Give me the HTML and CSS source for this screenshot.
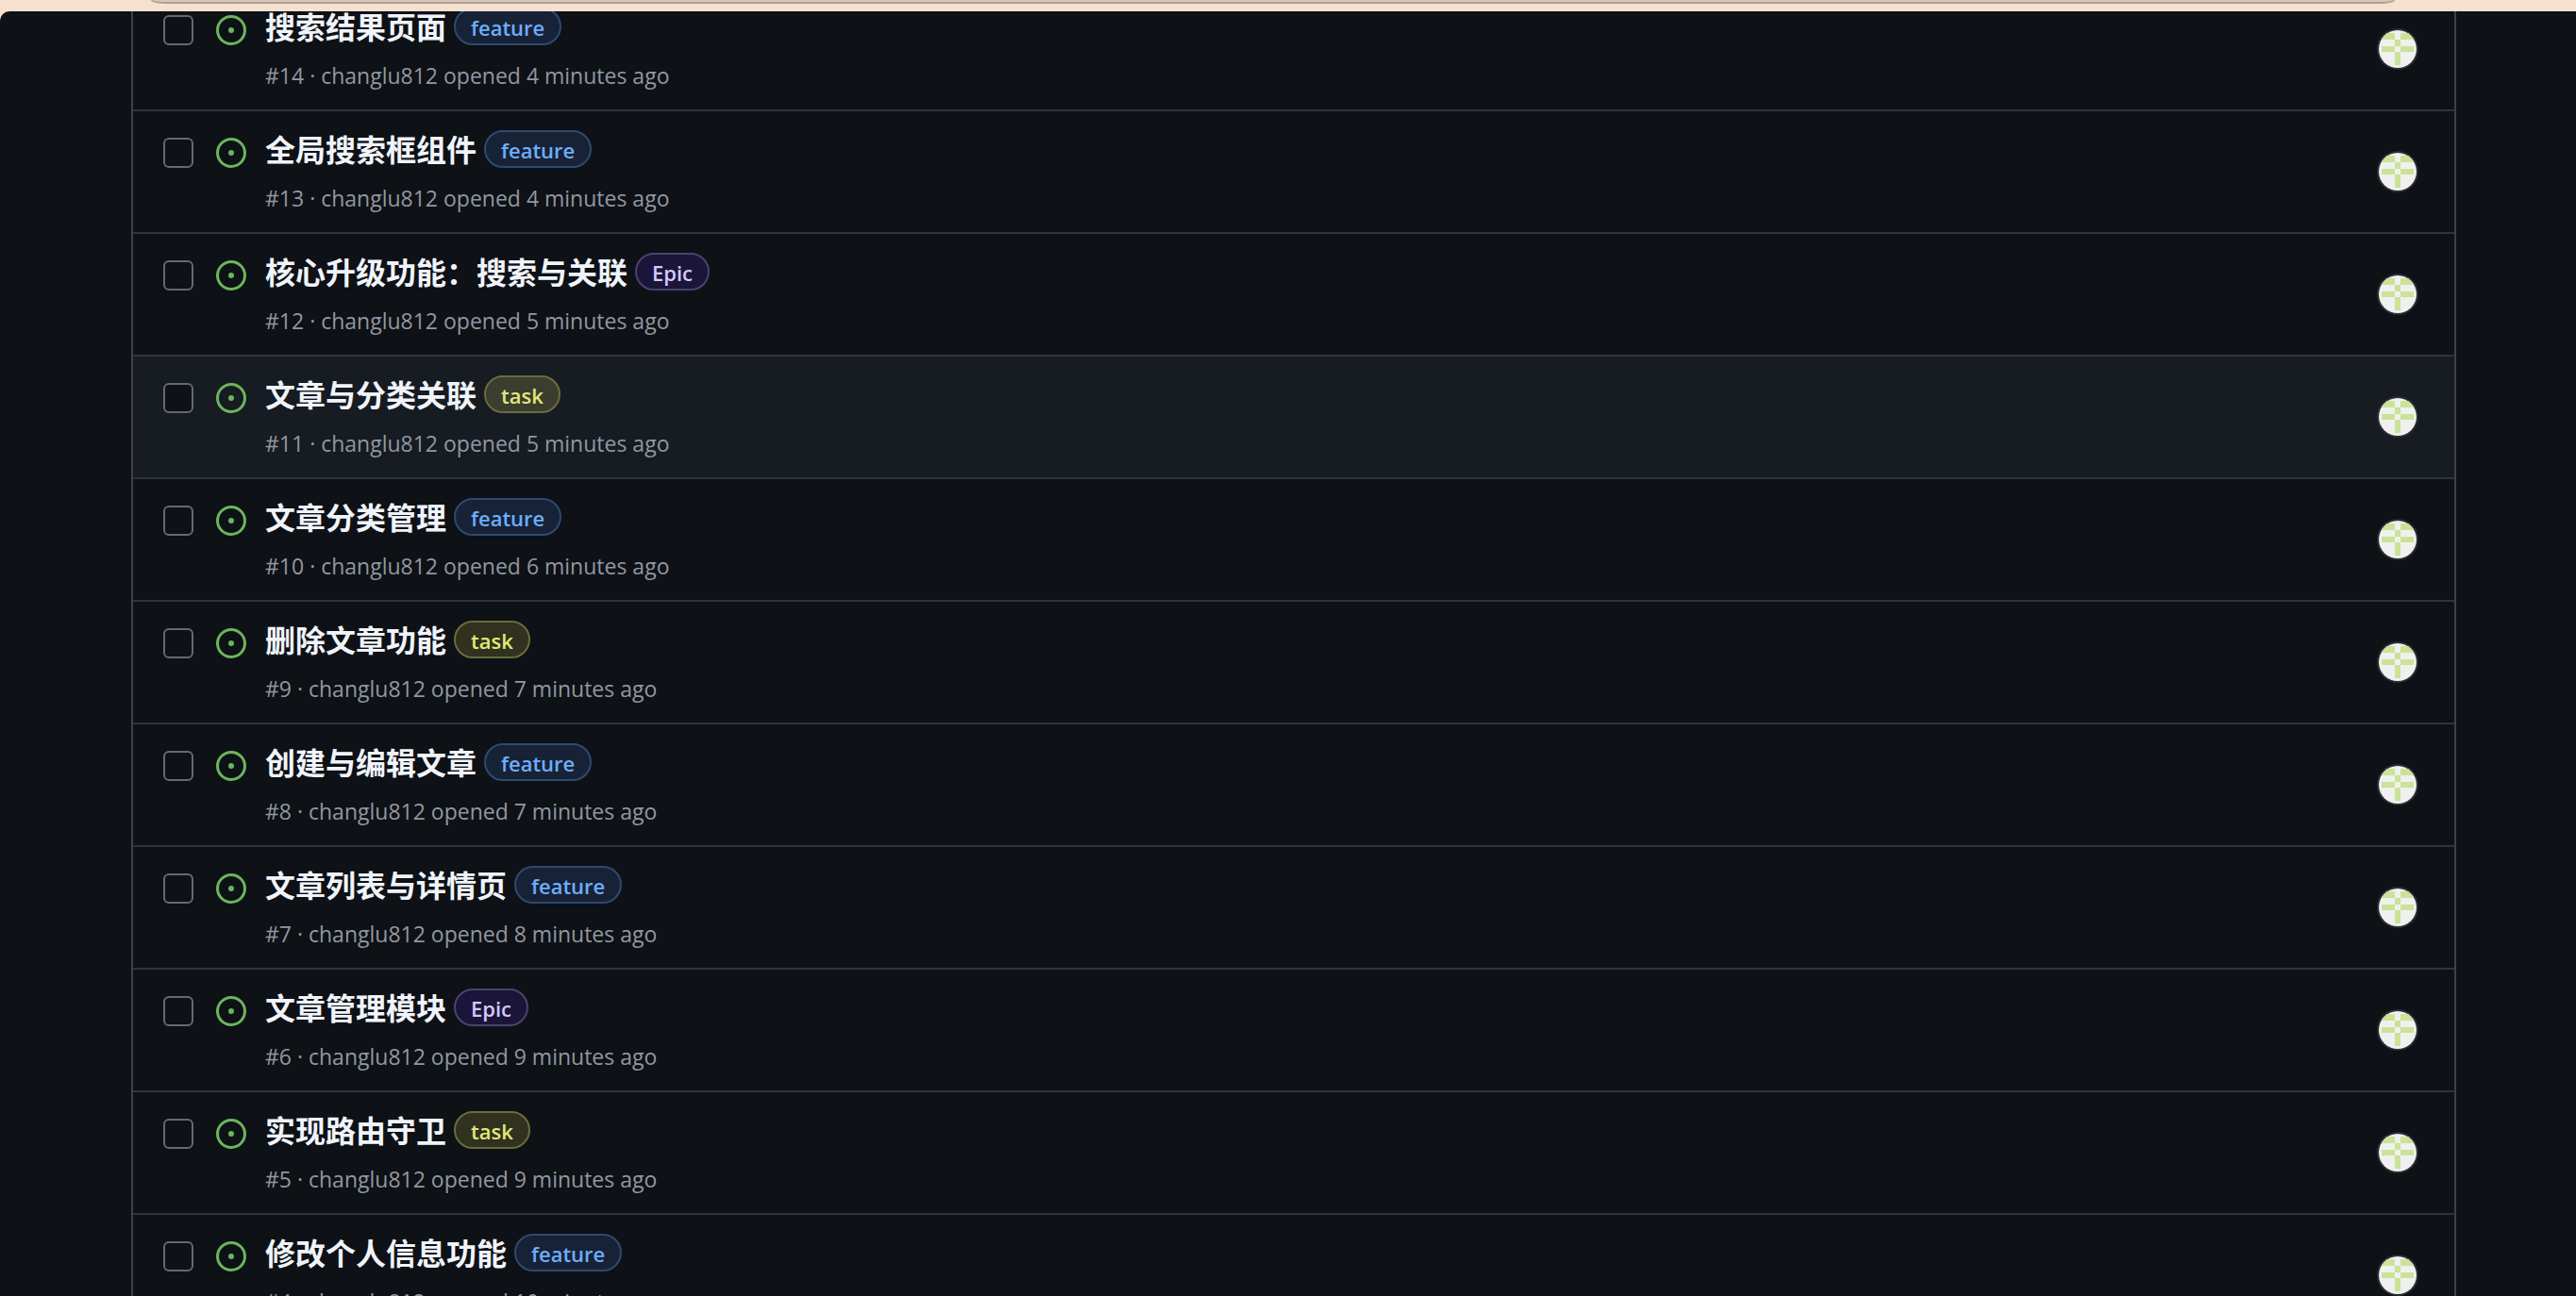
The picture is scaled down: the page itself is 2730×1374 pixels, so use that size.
FILE: index.html
```html
<!DOCTYPE html>
<html lang="zh-CN">
<head>
<meta charset="utf-8">
<title>Issues</title>
<link rel="stylesheet" href="styles.css">
</head>
<body>
<svg class="defs" aria-hidden="true">
  <symbol id="open" viewBox="0 0 16 16"><path d="M8 9.5a1.5 1.5 0 1 0 0-3 1.5 1.5 0 0 0 0 3Z"/><path d="M8 0a8 8 0 1 1 0 16A8 8 0 0 1 8 0ZM1.5 8a6.5 6.5 0 1 0 13 0 6.5 6.5 0 0 0-13 0Z"/></symbol>
  <symbol id="identicon" viewBox="0 0 40 40"><rect width="40" height="40" fill="#f0f0f0"/><path fill="#cbe396" d="M3 3h14v7H3zM23 3h14v7H23zM17 10h6v7h-6zM3 17h14v6H3zM23 17h14v6H23zM17 23h6v14h-6z"/></symbol>
</svg>
<header class="toolbar"><div class="address"></div></header>
<main class="page">
  <ul class="issues" id="issues"></ul>
</main>
<script src="issues.js"></script>
</body>
</html>
```
FILE: styles.css
```css
* { box-sizing: border-box; }
body {
  margin: 0;
  height: 100vh;
  display: flex;
  flex-direction: column;
  overflow: hidden;
  background: #f6e1d1;
  color: #9198a1;
  font: 23px/32px "Open Sans", "Noto Sans CJK SC", sans-serif;
}
.defs { position: absolute; width: 0; height: 0; }
.toolbar { flex: none; height: 12px; padding: 0 192px 0 160px; }
.address {
  height: 4px;
  border: 2px solid #aea093;
  border-top: 0;
  border-radius: 0 0 16px 16px / 0 0 4px 4px;
  background: #d9c6b8;
}
.page {
  flex: 1;
  min-height: 0;
  overflow: hidden;
  padding: 0 127px 0 139px;
  background: #0e1116;
  border-top-left-radius: 10px;
}
.issues {
  list-style: none;
  margin: -26px 0 0;
  padding: 0;
  border: solid #3d424a;
  border-width: 0 2px;
}
.issue {
  display: flex;
  align-items: flex-start;
  height: 130px;
  padding: 0 40px 0 32px;
  border-top: 2px solid #30343a;
}
.issue.active { background: #171b22; }
.check {
  appearance: none;
  flex: none;
  width: 32px;
  height: 32px;
  margin: 28px 24px 0 0;
  border: 2px solid #656971;
  border-radius: 6px;
  background: #0e1116;
}
.state { flex: none; width: 32px; height: 32px; margin: 28px 20px 0 0; fill: #6cb55d; }
.body { flex: 1; padding-top: 20px; }
.heading { display: flex; gap: 8px; height: 40px; }
.title {
  color: #f0f4fa;
  font: bold 32px/38px "Noto Sans CJK SC", sans-serif;
  text-decoration: none;
}
.label {
  height: 40px;
  padding: 0 16px;
  border: 2px solid;
  border-radius: 20px;
  font-size: 22px;
  font-weight: 600;
  line-height: 38px;
  text-decoration: none;
}
.feature { color: #6daefb; background: #172236; border-color: #2d4a70; }
.task { color: #e1e878; background: #30311f; border-color: #6a6c3d; }
.active .task { background: #3b3d2f; }
.epic { color: #d5c9fb; background: #1b1539; border-color: #4b426e; }
.meta { margin: 16px 0 0; }
.avatar {
  flex: none;
  width: 40px;
  height: 40px;
  margin-top: 44px;
  border-radius: 50%;
  box-shadow: 0 0 0 2px #2b2f35;
}
```
FILE: issues.js
```js
const issues = [
  [14, "搜索结果页面", "feature", 4],
  [13, "全局搜索框组件", "feature", 4],
  [12, "核心升级功能：搜索与关联", "Epic", 5],
  [11, "文章与分类关联", "task", 5],
  [10, "文章分类管理", "feature", 6],
  [9, "删除文章功能", "task", 7],
  [8, "创建与编辑文章", "feature", 7],
  [7, "文章列表与详情页", "feature", 8],
  [6, "文章管理模块", "Epic", 9],
  [5, "实现路由守卫", "task", 9],
  [4, "修改个人信息功能", "feature", 10],
];

document.getElementById("issues").innerHTML = issues.map(([id, title, label, age]) => `
  <li class="issue${id === 11 ? " active" : ""}">
    <input class="check" type="checkbox" aria-label="${title}">
    <svg class="state" aria-hidden="true"><use href="#open"/></svg>
    <div class="body">
      <div class="heading"><a class="title" href="#${id}">${title}</a><a class="label ${label.toLowerCase()}" href="#${label}">${label}</a></div>
      <p class="meta">#${id} · changlu812 opened ${age} minutes ago</p>
    </div>
    <svg class="avatar" aria-hidden="true"><use href="#identicon"/></svg>
  </li>`).join("");
```
